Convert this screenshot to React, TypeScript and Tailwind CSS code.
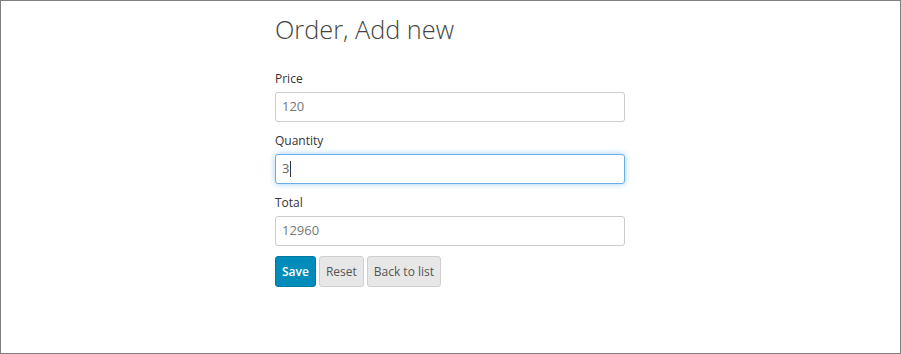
import React from 'react';

const font = { fontFamily: '"Open Sans", "Noto Sans", sans-serif' };

function Field({ label, value, focused }: { label: string; value: string; focused?: boolean }) {
  return (
    <div className="flex flex-col">
      <label className="text-[12px] leading-[18px] text-[#333] mb-[4px]">{label}</label>
      <div
        className={
          focused
            ? 'h-[30px] w-[350px] rounded-[3px] border border-[#66afe9] shadow-[0_0_6px_rgba(102,175,233,0.6)] bg-white flex items-center px-[6px] text-[13px] text-[#666]'
            : 'h-[30px] w-[350px] rounded-[3px] border border-[#cccccc] bg-white flex items-center px-[6px] text-[13px] text-[#777]'
        }
      >
        <span>{value}</span>
        {focused && <span className="ml-[1px] h-[16px] w-px bg-[#333]" />}
      </div>
    </div>
  );
}

export default function App() {
  return (
    <div className="w-[901px] h-[354px] border border-[#808080] bg-white" style={font}>
      <div className="ml-[274px] w-[350px] flex flex-col">
        <h1 className="mt-[13px] text-[25.3px] leading-[31px] font-light text-[#444]">Order, Add new</h1>
        <div className="mt-[25px] flex flex-col gap-[10px]">
          <Field label="Price" value="120" />
          <Field label="Quantity" value="3" focused />
          <Field label="Total" value="12960" />
        </div>
        <div className="mt-[10px] flex gap-[3px]">
          <button className="h-[31px] px-[6px] rounded-[3px] bg-[#008cba] border border-[#0079a1] text-white text-[12px] font-semibold">Save</button>
          <button className="h-[31px] px-[6px] rounded-[3px] bg-[#e7e7e7] border border-[#cfcfcf] text-[#555] text-[12px]">Reset</button>
          <button className="h-[31px] px-[6px] rounded-[3px] bg-[#e7e7e7] border border-[#cfcfcf] text-[#555] text-[12px]">Back to list</button>
        </div>
      </div>
    </div>
  );
}
